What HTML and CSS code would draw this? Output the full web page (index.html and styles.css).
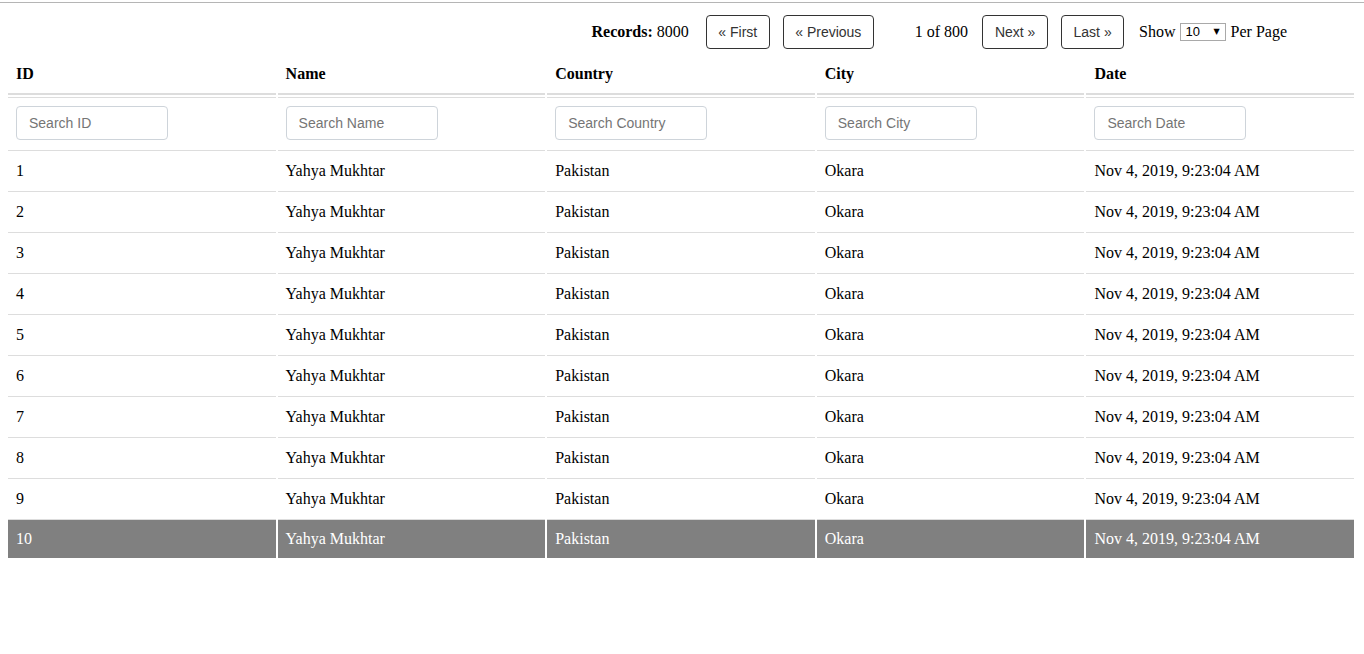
FILE: index.html
```html
<!DOCTYPE html>
<html>
<head>
<meta charset="utf-8">
<link rel="stylesheet" href="styles.css">
</head>
<body>
<div class="topline"></div>
<div class="page">
  <div class="bar">
    <span class="records"><b>Records:</b> 8000</span>
    <button class="btn first">« First</button>
    <button class="btn prev">« Previous</button>
    <span class="pageinfo">1 of 800</span>
    <button class="btn next">Next »</button>
    <button class="btn last">Last »</button>
    <span class="show">Show</span>
    <span class="selwrap"><select class="perpage"><option>10</option><option>20</option><option>50</option></select></span>
    <span class="perlabel">Per Page</span>
  </div>
  <table class="grid">
    <thead>
      <tr class="head">
        <th>ID</th><th>Name</th><th>Country</th><th>City</th><th>Date</th>
      </tr>
      <tr class="search">
        <td><input class="sinput" placeholder="Search ID"></td>
        <td><input class="sinput" placeholder="Search Name"></td>
        <td><input class="sinput" placeholder="Search Country"></td>
        <td><input class="sinput" placeholder="Search City"></td>
        <td><input class="sinput" placeholder="Search Date"></td>
      </tr>
    </thead>
    <tbody>
      <tr><td>1</td><td>Yahya Mukhtar</td><td>Pakistan</td><td>Okara</td><td>Nov 4, 2019, 9:23:04 AM</td></tr>
      <tr><td>2</td><td>Yahya Mukhtar</td><td>Pakistan</td><td>Okara</td><td>Nov 4, 2019, 9:23:04 AM</td></tr>
      <tr><td>3</td><td>Yahya Mukhtar</td><td>Pakistan</td><td>Okara</td><td>Nov 4, 2019, 9:23:04 AM</td></tr>
      <tr><td>4</td><td>Yahya Mukhtar</td><td>Pakistan</td><td>Okara</td><td>Nov 4, 2019, 9:23:04 AM</td></tr>
      <tr><td>5</td><td>Yahya Mukhtar</td><td>Pakistan</td><td>Okara</td><td>Nov 4, 2019, 9:23:04 AM</td></tr>
      <tr><td>6</td><td>Yahya Mukhtar</td><td>Pakistan</td><td>Okara</td><td>Nov 4, 2019, 9:23:04 AM</td></tr>
      <tr><td>7</td><td>Yahya Mukhtar</td><td>Pakistan</td><td>Okara</td><td>Nov 4, 2019, 9:23:04 AM</td></tr>
      <tr><td>8</td><td>Yahya Mukhtar</td><td>Pakistan</td><td>Okara</td><td>Nov 4, 2019, 9:23:04 AM</td></tr>
      <tr><td>9</td><td>Yahya Mukhtar</td><td>Pakistan</td><td>Okara</td><td>Nov 4, 2019, 9:23:04 AM</td></tr>
      <tr class="selected"><td>10</td><td>Yahya Mukhtar</td><td>Pakistan</td><td>Okara</td><td>Nov 4, 2019, 9:23:04 AM</td></tr>
    </tbody>
  </table>
</div>
</body>
</html>
```
FILE: styles.css
```css
html, body {
  margin: 0;
  padding: 0;
  background: #fff;
}
body {
  font-family: "Liberation Serif", "Times New Roman", serif;
  font-size: 16px;
  color: #000;
}
.topline {
  margin-top: 2px;
  border-top: 1px solid #b5b5b5;
}
.page {
  padding: 0 8px;
}
.bar {
  display: flex;
  align-items: center;
  justify-content: flex-end;
  height: 50px;
  padding-right: 69px;
  box-sizing: border-box;
  padding-top: 7px;
}
.records {
  margin-right: 17px;
}
.btn {
  height: 34px;
  padding: 0;
  text-align: center;
  border: 1px solid #333;
  border-radius: 4px;
  background: #fff;
  color: #333;
  font-family: "Liberation Sans", Arial, sans-serif;
  font-size: 14px;
}
.first { width: 64px; margin-right: 13px; }
.prev { width: 91px; margin-right: 41px; }
.pageinfo { margin-right: 14px; }
.next { width: 66px; margin-right: 13px; }
.last { width: 63px; margin-right: 15px; }
.show { margin-right: 4px; }
.selwrap {
  position: relative;
  display: inline-block;
  margin-right: 5px;
  height: 18px;
}
.selwrap::after {
  content: "\25BC";
  position: absolute;
  right: 6px;
  top: 4px;
  font-size: 8px;
  line-height: 10px;
  color: #000;
  pointer-events: none;
  font-family: "DejaVu Sans", sans-serif;
}
.perpage {
  -webkit-appearance: none;
  appearance: none;
  width: 46px;
  height: 18px;
  font-family: "Liberation Sans", Arial, sans-serif;
  font-size: 13px;
  border: 1px solid #a9a9a9;
  border-radius: 0;
  background: #fff;
  color: #000;
  padding: 0 0 0 5px;
  display: block;
}
.grid {
  width: calc(100% + 2px);
  margin-left: -2px;
  border-collapse: separate;
  border-spacing: 2px 0;
  table-layout: fixed;
}
.grid th {
  text-align: left;
  font-weight: bold;
  padding: 2px 8px 0 8px;
  height: 38px;
  border-bottom: 2px solid #ddd;
}
.search td {
  border-top: 2px solid transparent;
  box-shadow: inset 0 1px 0 #ddd;
  padding: 9px 8px 0 8px;
  height: 55px;
  vertical-align: top;
  box-sizing: border-box;
}
.sinput {
  width: 152px;
  height: 34px;
  box-sizing: border-box;
  border: 1px solid #ced4da;
  border-radius: 4px;
  padding: 0 12px;
  font-family: "Liberation Sans", Arial, sans-serif;
  font-size: 14px;
  color: #333;
  display: block;
}
.sinput::placeholder {
  color: #757575;
}
.grid tbody td {
  border-top: 1px solid #ddd;
  height: 40px;
  padding: 0 8px;
  vertical-align: middle;
}
.grid tbody tr.selected td {
  background: #808080;
  color: #fff;
  height: 38px;
}
```
